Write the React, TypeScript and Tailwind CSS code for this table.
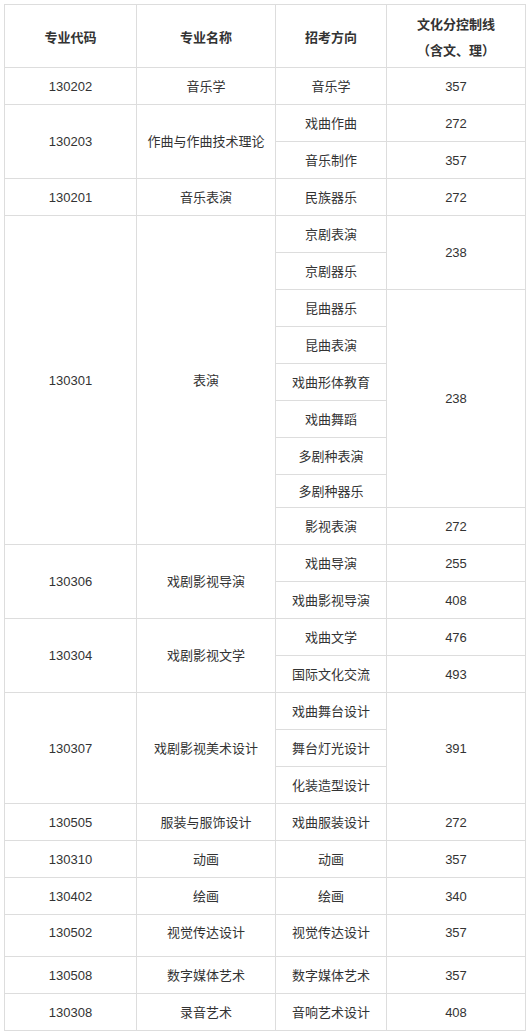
type Row = {
  code?: string;
  codeSpan?: number;
  name?: string;
  nameSpan?: number;
  dir: string;
  score?: string;
  scoreSpan?: number;
  tall?: boolean;
  short?: boolean;
};

const rows: Row[] = [
  { code: "130202", name: "音乐学", dir: "音乐学", score: "357" },
  { code: "130203", codeSpan: 2, name: "作曲与作曲技术理论", nameSpan: 2, dir: "戏曲作曲", score: "272" },
  { dir: "音乐制作", score: "357" },
  { code: "130201", name: "音乐表演", dir: "民族器乐", score: "272" },
  { code: "130301", codeSpan: 9, name: "表演", nameSpan: 9, dir: "京剧表演", score: "238", scoreSpan: 2 },
  { dir: "京剧器乐" },
  { dir: "昆曲器乐", score: "238", scoreSpan: 6 },
  { dir: "昆曲表演" },
  { dir: "戏曲形体教育" },
  { dir: "戏曲舞蹈" },
  { dir: "多剧种表演" },
  { dir: "多剧种器乐", short: true },
  { dir: "影视表演", score: "272" },
  { code: "130306", codeSpan: 2, name: "戏剧影视导演", nameSpan: 2, dir: "戏曲导演", score: "255" },
  { dir: "戏曲影视导演", score: "408" },
  { code: "130304", codeSpan: 2, name: "戏剧影视文学", nameSpan: 2, dir: "戏曲文学", score: "476" },
  { dir: "国际文化交流", score: "493" },
  { code: "130307", codeSpan: 3, name: "戏剧影视美术设计", nameSpan: 3, dir: "戏曲舞台设计", score: "391", scoreSpan: 3 },
  { dir: "舞台灯光设计" },
  { dir: "化装造型设计" },
  { code: "130505", name: "服装与服饰设计", dir: "戏曲服装设计", score: "272" },
  { code: "130310", name: "动画", dir: "动画", score: "357" },
  { code: "130402", name: "绘画", dir: "绘画", score: "340" },
  { code: "130502", name: "视觉传达设计", dir: "视觉传达设计", score: "357", tall: true },
  { code: "130508", name: "数字媒体艺术", dir: "数字媒体艺术", score: "357" },
  { code: "130308", name: "录音艺术", dir: "音响艺术设计", score: "408" },
];

const cell = "border border-[#dddddd] text-center align-middle px-0";

export default function App() {
  return (
    <div
      className="bg-white p-[4px] text-[13px] text-[#333333] w-[529px] min-h-[1036px]"
      style={{ fontFamily: '"Liberation Sans", "Noto Sans CJK SC", sans-serif' }}
    >
      <table className="border-collapse table-fixed w-[521px]">
        <colgroup>
          <col className="w-[132px]" />
          <col className="w-[139px]" />
          <col className="w-[111px]" />
          <col className="w-[139px]" />
        </colgroup>
        <thead>
          <tr className="h-[63px] font-bold">
            <th className={`${cell} pt-[3px] pb-0`}>专业代码</th>
            <th className={`${cell} pt-[3px] pb-0`}>专业名称</th>
            <th className={`${cell} pt-[3px] pb-0`}>招考方向</th>
            <th className={`${cell} pt-[3px] pb-0 leading-[26px]`}>
              文化分控制线
              <br />
              （含文、理）
            </th>
          </tr>
        </thead>
        <tbody>
          {rows.map((r, i) => {
            const h = r.tall ? "h-[42px]" : r.short ? "h-[33px]" : "h-[37px]";
            const pad = r.tall ? "pt-[1px] pb-[6px]" : "pt-[1px] pb-0";
            return (
              <tr key={i} className={h}>
                {r.code && (
                  <td className={`${cell} ${pad}`} rowSpan={r.codeSpan ?? 1}>
                    {r.code}
                  </td>
                )}
                {r.name && (
                  <td className={`${cell} ${pad}`} rowSpan={r.nameSpan ?? 1}>
                    {r.name}
                  </td>
                )}
                <td className={`${cell} ${pad}`}>{r.dir}</td>
                {r.score && (
                  <td className={`${cell} ${pad}`} rowSpan={r.scoreSpan ?? 1}>
                    {r.score}
                  </td>
                )}
              </tr>
            );
          })}
        </tbody>
      </table>
    </div>
  );
}
